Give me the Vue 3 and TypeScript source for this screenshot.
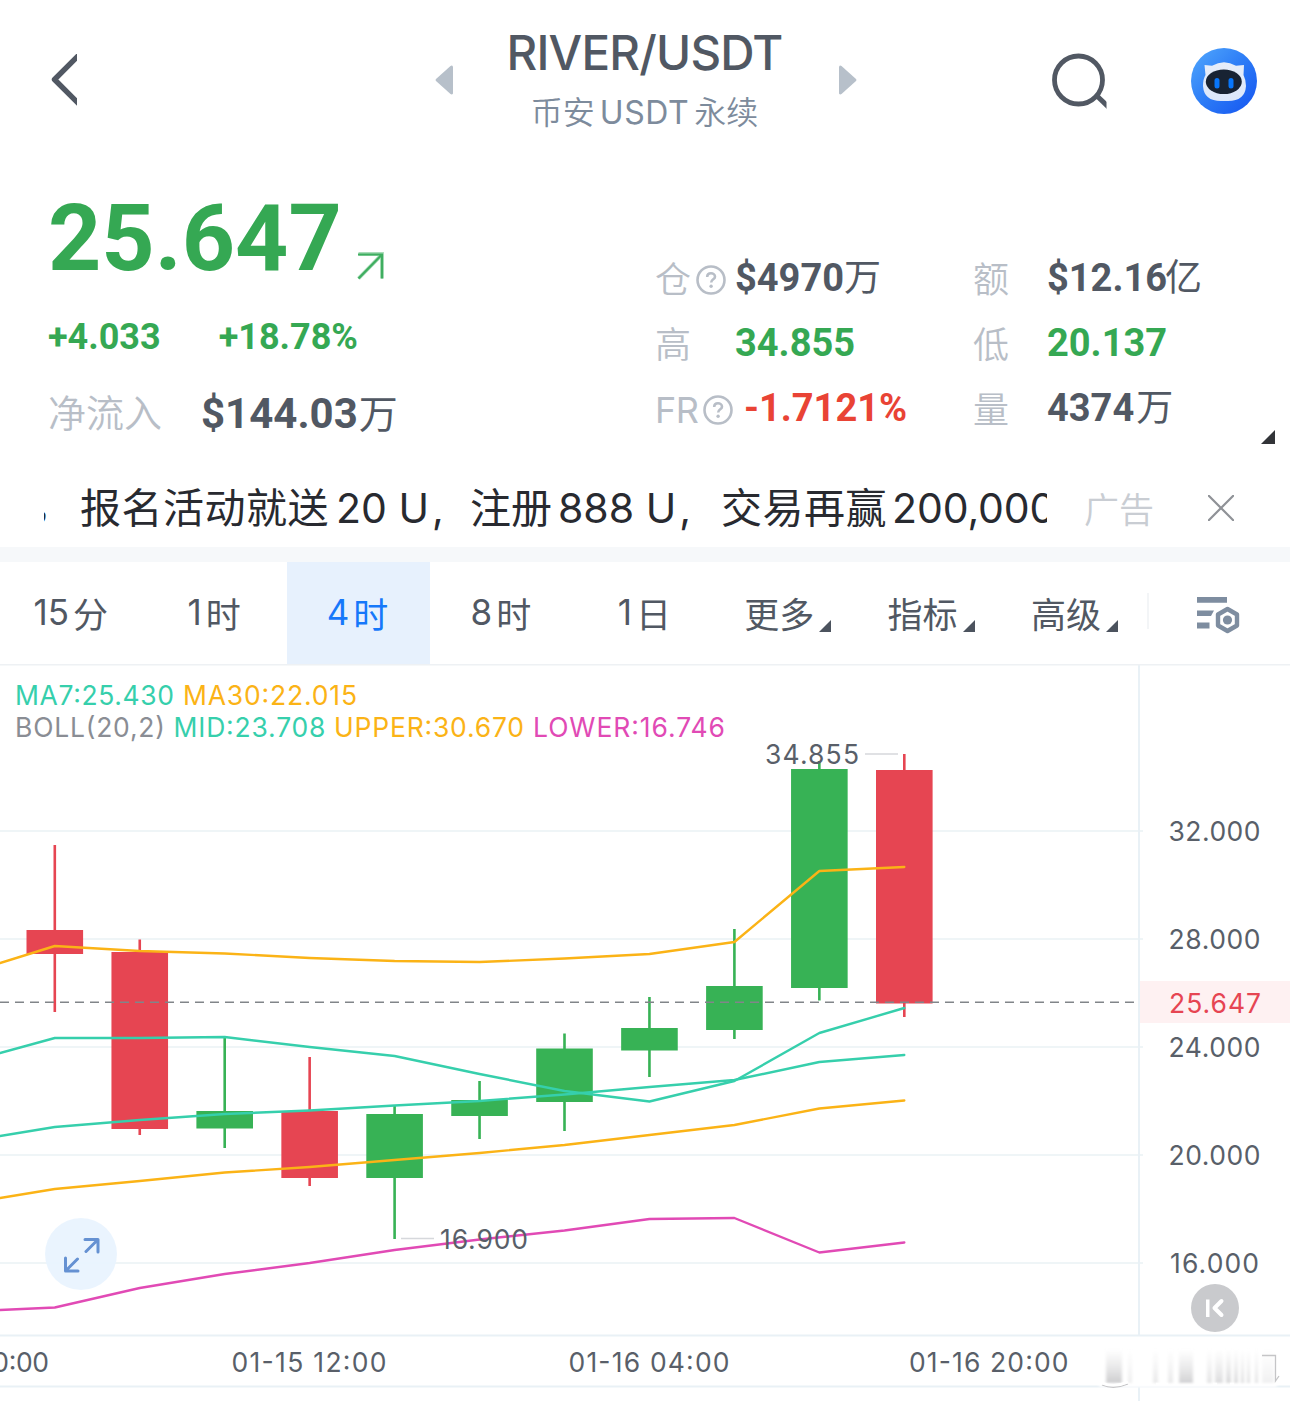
<script setup lang="ts">
interface Tab { num?: string; unit: string; active?: boolean; menu?: boolean }
interface Candle { up: boolean; high: number; low: number; top: number; bottom: number }

const tabs: Tab[] = [
  { num: '15', unit: '分' },
  { num: '1', unit: '时' },
  { num: '4', unit: '时', active: true },
  { num: '8', unit: '时' },
  { num: '1', unit: '日' },
  { unit: '更多', menu: true },
  { unit: '指标', menu: true },
  { unit: '高级', menu: true },
]

const candles: Candle[] = [
  { up: false, high: 845, low: 1012, top: 930, bottom: 954 },
  { up: false, high: 939.5, low: 1135, top: 952, bottom: 1129 },
  { up: true, high: 1037, low: 1148, top: 1111, bottom: 1128.5 },
  { up: false, high: 1057, low: 1186, top: 1111, bottom: 1178 },
  { up: true, high: 1106, low: 1239, top: 1114, bottom: 1178 },
  { up: true, high: 1081, low: 1139, top: 1100, bottom: 1116 },
  { up: true, high: 1033.5, low: 1131, top: 1048.5, bottom: 1102 },
  { up: true, high: 997, low: 1077, top: 1028, bottom: 1050.5 },
  { up: true, high: 929, low: 1039, top: 986, bottom: 1030 },
  { up: true, high: 761, low: 1000.5, top: 769, bottom: 988 },
  { up: false, high: 754, low: 1017, top: 770, bottom: 1003.5 },
]
const cx = (i: number): number => 54.8 + i * 84.95

const series = [
  { color: '#fbb316', ys: [963, 946, 951, 953.5, 958, 961, 962, 958.5, 954, 942, 871, 867] },
  { color: '#36cfac', ys: [1053, 1038, 1038, 1037, 1047, 1056, 1074, 1091, 1101.5, 1081, 1033, 1008] },
  { color: '#36cfac', ys: [1136, 1127, 1120, 1114, 1110.5, 1105.5, 1101, 1094.5, 1087, 1080, 1062, 1055] },
  { color: '#fbb316', ys: [1198, 1189, 1181, 1172.5, 1167, 1160, 1153, 1145, 1135, 1125, 1108.5, 1100.5] },
  { color: '#e14ab5', ys: [1310, 1307.5, 1288, 1274, 1263, 1250, 1239.5, 1230.5, 1219, 1218, 1252.5, 1242.5] },
]
const points = (ys: number[]): string =>
  ys.map((y, i) => `${i === 0 ? 0 : cx(i - 1)},${y}`).join(' ')

const ticks = [
  { y: 831, text: '32.000', x: 1168.5, w: 92 },
  { y: 939, text: '28.000', x: 1168.5, w: 92 },
  { y: 1047, text: '24.000', x: 1168.5, w: 92 },
  { y: 1155, text: '20.000', x: 1168.5, w: 92 },
  { y: 1263, text: '16.000', x: 1170, w: 89 },
]

const legend = [
  { x: 15, y: 705, w: 159, color: '#36cfac', text: 'MA7:25.430' },
  { x: 183, y: 705, w: 174, color: '#fbb316', text: 'MA30:22.015' },
  { x: 15, y: 737, w: 150, color: '#8a8d94', text: 'BOLL(20,2)' },
  { x: 173.5, y: 737, w: 152, color: '#36cfac', text: 'MID:23.708' },
  { x: 334, y: 737, w: 190, color: '#fbb316', text: 'UPPER:30.670' },
  { x: 533, y: 737, w: 192, color: '#e14ab5', text: 'LOWER:16.746' },
]

const smears = [
  { x: 1106, w: 16, o: 1 }, { x: 1128, w: 4, o: 0.35 }, { x: 1153, w: 5, o: 0.45 },
  { x: 1168, w: 5, o: 0.45 }, { x: 1179, w: 14, o: 0.9 }, { x: 1207, w: 5, o: 0.55 },
  { x: 1215, w: 8, o: 0.7 }, { x: 1226, w: 5, o: 0.8 }, { x: 1234, w: 4, o: 0.75 },
  { x: 1241, w: 3, o: 0.7 }, { x: 1247, w: 3, o: 0.65 }, { x: 1255, w: 3, o: 0.6 },
  { x: 1262, w: 12, o: 0.3 },
]
</script>

<template>
  <main class="screen">
    <header class="top">
      <svg class="back" width="28" height="52" viewBox="0 0 28 52"><path d="M31 0 5.500 25.500 31 51" fill="none" stroke="#515863" stroke-width="5.400" stroke-linejoin="round" /></svg>
      <div class="pair">
        <svg width="20" height="32" viewBox="0 0 20 32"><path d="M19 2.500V29.500Q18 31 16.500 30L2 17Q1 16 2 15L16.500 2Q18 .8 19 2.500Z" fill="#b7c0ca" /></svg>
        <div class="names">
          <h1>RIVER/USDT</h1>
          <p><span>币安</span><span class="mid">USDT</span><span>永续</span></p>
        </div>
        <svg width="20" height="32" viewBox="0 0 20 32"><path d="M1 2.500V29.500Q2 31 3.500 30L18 17Q19 16 18 15L3.500 2Q2 .8 1 2.500Z" fill="#b7c0ca" /></svg>
      </div>
      <svg class="search" width="58" height="58" viewBox="0 0 58 58"><g fill="none" stroke="#515863"><circle cx="27.500" cy="28" r="24" stroke-width="4.800" /><path d="M45.500 43.500 60 57.500" stroke-width="5" /></g><path d="M55.500 45V58H58V45Z" fill="#fff" /></svg>
      <svg class="bot" width="66" height="66" viewBox="0 0 66 66">
        <defs>
          <linearGradient id="bg" x1="0" y1="0" x2="1" y2="1"><stop offset="0" stop-color="#52a9fd" /><stop offset=".5" stop-color="#2c7bf6" /><stop offset="1" stop-color="#1453f0" /></linearGradient>
          <linearGradient id="face" x1="0" y1="0" x2="0" y2="1"><stop offset="0" stop-color="#e6edf9" /><stop offset="1" stop-color="#dce7fb" /></linearGradient>
        </defs>
        <circle cx="33" cy="33" r="33" fill="url(#bg)" />
        <path d="M13.500 17 21 17.800Q33 10.500 45 17.800L53 17 52.500 27Q55 32 55 38Q54 53 37 53H30Q13 53 12 38Q12 31 14.500 27Z" fill="url(#face)" />
        <ellipse cx="32.800" cy="33.800" rx="18" ry="12.300" fill="#182333" />
        <rect x="23.500" y="30" width="5" height="10.500" rx="2.500" fill="#0876fa" /><rect x="37.500" y="30" width="5" height="10.500" rx="2.500" fill="#0876fa" />
      </svg>
    </header>

    <section class="quote">
      <div class="left">
        <div class="price"><strong>25.647</strong>
          <svg width="30" height="30" viewBox="0 0 30 30"><path d="M2.500 3H26V27.500M26 3.500 2.500 27.500" fill="none" stroke="#a9dcb8" stroke-width="3.800" /><path d="M2 3.500H26V27.500M26 3.500 2.500 27.500" fill="none" stroke="#3fae60" stroke-width="2.200" /></svg>
        </div>
        <div class="change"><b>+4.033</b><b>+18.78%</b></div>
        <div class="flow"><span>净流入</span><b>$144.03<i>万</i></b></div>
      </div>
      <div class="stats">
        <div class="row">
          <span class="key k1">仓<svg class="help" width="30" height="30" viewBox="0 0 30 30"><circle cx="15" cy="15" r="13.500" /><path d="M11.200 12C11.200 9.500 13 8.200 15 8.200S19 9.600 19 11.700C19 14.400 15.200 14.200 15.200 17.500" /><circle class="dot" cx="15.100" cy="21.300" r="1.700" /></svg></span>
          <b class="v1">$4970<i>万</i></b><span class="key k2">额</span><b class="v2">$12.16<i class="tight">亿</i></b>
        </div>
        <div class="row">
          <span class="key k1">高</span><b class="v1 up">34.855</b><span class="key k2">低</span><b class="v2 up">20.137</b>
        </div>
        <div class="row">
          <span class="key k1 wide"><em>FR</em><svg class="help" width="30" height="30" viewBox="0 0 30 30"><circle cx="15" cy="15" r="13.500" /><path d="M11.200 12C11.200 9.500 13 8.200 15 8.200S19 9.600 19 11.700C19 14.400 15.200 14.200 15.200 17.500" /><circle class="dot" cx="15.100" cy="21.300" r="1.700" /></svg></span>
          <b class="v1 down narrow">-1.7121%</b><span class="key k2">量</span><b class="v2">4374<i class="sp">万</i></b>
        </div>
      </div>
      <svg class="expand" width="14" height="14" viewBox="0 0 14 14"><path d="M14 0V14H0Z" fill="#323438" /></svg>
    </section>

    <section class="ad">
      <div class="marquee"><div class="track"><span class="c0">，</span><span class="a1">报名活动就送</span><span class="a2">20 U<u>,</u></span><span class="a3">注册</span><span class="a4">888 U<u>,</u></span><span class="a5">交易再赢</span><span class="a6">200,000</span></div></div>
      <span class="tag">广告</span>
      <svg width="26" height="26" viewBox="0 0 26 26"><path d="M0 0 26 26M26 0 0 26" stroke="#8f9297" stroke-width="2.200" /></svg>
    </section>

    <nav class="tabs">
      <div v-for="(t, i) in tabs" :key="i" class="tab" :class="{ active: t.active, menu: t.menu }">
        <span v-if="t.num" class="num">{{ t.num }}</span>
        <span>{{ t.unit }}</span>
        <svg v-if="t.menu" width="12" height="12" viewBox="0 0 12 12"><path d="M12 0V12H0Z" fill="#4c535e" /></svg>
      </div>
      <div class="config">
        <svg width="44" height="38" viewBox="0 0 44 38"><path d="M1 1H31V6.800H1ZM1 14.500H18L15 20H1ZM1 26.500H13.500V32.500H1Z" fill="#7e8da0" /><path d="M31.500 13 41 18.500V29.500L31.500 35 22 29.500V18.500Z" fill="none" stroke="#7e8da0" stroke-width="4.400" stroke-linejoin="round" /><circle cx="31.500" cy="24" r="4.600" fill="#7e8da0" /></svg>
      </div>
    </nav>

    <svg class="chart" width="1290" height="737" viewBox="0 664 1290 737">
      <defs>
        <linearGradient id="smear" x1="0" y1="0" x2="0" y2="1"><stop offset="0" stop-color="#dcdcdd" stop-opacity="0" /><stop offset="1" stop-color="#cdcdcf" /></linearGradient>
        <filter id="soft" x="-10%" y="-20%" width="120%" height="140%"><feGaussianBlur stdDeviation="1.800 1" /></filter>
      </defs>
      <g stroke="#eff5f7" stroke-width="2">
        <path v-for="t in ticks" :key="t.y" :d="`M0 ${t.y}H1143`" />
        <path d="M0 1335.500H1290M0 1386.500H1290M1139 664V1335M1139 1387V1401" stroke="#e9f1f6" />
        <path d="M0 664.500H1290" stroke="#eef1f4" />
      </g>
      <rect x="1140" y="981" width="150" height="42" fill="#fef1f2" />
      <g v-for="(c, i) in candles" :key="i" :fill="c.up ? '#37b255' : '#e64552'">
        <rect :x="cx(i) - 1.300" :y="c.high" width="2.600" :height="c.low - c.high" />
        <rect :x="cx(i) - 28.300" :y="c.top" width="56.600" :height="c.bottom - c.top" />
      </g>
      <path d="M0 1002.300H1136" stroke="#818589" stroke-width="1.500" stroke-dasharray="9 6" />
      <polyline v-for="(s, i) in series" :key="`s${i}`" :points="points(s.ys)" fill="none" :stroke="s.color" stroke-width="2.400" stroke-linejoin="round" stroke-linecap="round" />
      <path d="M865 754H898M401 1238.500H434" stroke="#d6d8dc" stroke-width="1.500" />
      <g class="txt">
        <text v-for="l in legend" :key="l.text" :x="l.x" :y="l.y" :textLength="l.w" :style="{ fill: l.color }">{{ l.text }}</text>
        <text x="765" y="764" textLength="94">34.855</text>
        <text x="440" y="1248.500" textLength="88">16.900</text>
        <text v-for="t in ticks" :key="t.text" :x="t.x" :y="t.y + 10" :textLength="t.w">{{ t.text }}</text>
        <text x="1169" y="1012.500" textLength="92" style="fill: #e64552">25.647</text>
        <text x="-24" y="1371.500" textLength="73">00:00</text>
        <text x="231.500" y="1371.500" textLength="155">01-15 12:00</text>
        <text x="568.500" y="1371.500" textLength="161">01-16 04:00</text>
        <text x="909" y="1371.500" textLength="159.500">01-16 20:00</text>
      </g>
      <circle cx="81" cy="1254" r="36" fill="#e9f3fe" fill-opacity=".94" />
      <path d="M85 1239.500H98V1252M97 1240.500 86 1251.500M65.500 1258V1271H78M66.500 1270 77.500 1259" fill="none" stroke="#6591d2" stroke-width="3" stroke-linecap="round" stroke-linejoin="round" />
      <circle cx="1215" cy="1308" r="24" fill="#c9cacd" />
      <path d="M1206 1299.500H1209.500V1317H1206Z" fill="#fff" />
      <path d="M1221.500 1301 1214.500 1308 1221.500 1315" fill="none" stroke="#fff" stroke-width="4" stroke-linecap="round" stroke-linejoin="round" />
      <g filter="url(#soft)">
        <rect x="1099" y="1352" width="178" height="35" fill="#fff" />
        <rect v-for="s in smears" :key="s.x" :x="s.x" y="1349" :width="s.w" height="34" fill="url(#smear)" :opacity="s.o" />
      </g>
      <path d="M1262 1355.500H1275.500V1381L1279 1376M1102 1385Q1114 1390 1128 1384" fill="none" stroke="#c5c5c7" stroke-width="1.300" />
      <path d="M1102 1383Q1114 1388 1128 1382M1156 1384H1168M1196 1384H1206M1213 1384H1217M1230 1384H1234" fill="none" stroke="#fff" stroke-width="2.500" />
    </svg>
  </main>
</template>

<style>
body { margin: 0; background: #fff; overflow: hidden; }
</style>

<style scoped>
.screen { width: 1290px; height: 1401px; overflow: hidden; background: #fff; color: #515863; font-family: Inter, 'Noto Sans CJK SC', sans-serif; display: flex; flex-direction: column; }
svg { display: block; flex: none; }
h1, p { margin: 0; }
i, em { font-style: normal; }
u { text-decoration: none; margin-left: 3px; }
span, b, strong { white-space: nowrap; }
.top { height: 160px; flex: none; display: flex; align-items: center; box-sizing: border-box; padding: 0 33px 0 49px; }
.pair { width: 424px; margin-left: 357px; display: flex; align-items: center; justify-content: space-between; }
.names { display: flex; flex-direction: column; align-items: center; height: 160px; box-sizing: border-box; padding-top: 23px; }
h1 { font-size: 47.5px; line-height: 60px; font-weight: 500; letter-spacing: -.8px; margin-left: -3px; }
.names p { display: flex; align-items: center; color: #7d8b9c; font-size: 32px; line-height: 60px; font-weight: 350; margin: 0 0 0 -3px; }
.mid { font-weight: 400; letter-spacing: .6px; margin: 0 5px 0 5px; }
.search { margin: 2px 0 0 193px; }
.bot { margin-left: auto; margin-top: 2px; }
.quote { height: 300px; flex: none; display: flex; position: relative; }
.left { width: 655px; padding-left: 48px; box-sizing: border-box; font-family: Roboto, 'Noto Sans CJK SC', sans-serif; }
.price { display: flex; color: #35a853; height: 150px; }
.price strong { font-size: 93px; line-height: 158px; font-weight: 700; }
.price svg { margin: 91px 0 0 14px; }
.change { display: flex; gap: 58px; color: #35a853; font-size: 36px; line-height: 54px; height: 54px; }
.flow { display: flex; margin-top: 20px; line-height: 60px; font-size: 38px; color: #b8bec7; font-weight: 350; }
.flow b { font-size: 42px; font-weight: 700; color: #515863; margin-left: 39px; }
.flow i { font-size: 39px; font-weight: 400; margin-left: 1px; }
.stats { padding-top: 86px; }
.row { display: flex; height: 65px; line-height: 65px; font-size: 36px; }
.row b { font-family: Roboto, 'Noto Sans CJK SC', sans-serif; font-size: 38px; font-weight: 700; }
.row i { font-weight: 400; font-size: 37px; }
.row .tight { margin-left: -2px; }
.sp { margin-left: 2px; }
.key { display: flex; align-items: center; color: #b8bec7; font-weight: 350; gap: 5px; padding-top: 3px; box-sizing: border-box; }
.key em { font-size: 36px; font-weight: 400; letter-spacing: -.6px; }
.k1 { width: 80px; }
.k1.wide { width: 89px; gap: 5px; }
.v1 { width: 238px; }
.v1.narrow { width: 229px; }
.k2 { width: 74px; }
.help { fill: none; stroke: #b8bec7; stroke-width: 2.6; }
.help .dot { fill: #b8bec7; stroke: none; }
.up { color: #35a853; }
.down { color: #e94335; }
.expand { position: absolute; right: 15px; bottom: 16px; }
.ad { height: 87px; flex: none; display: flex; align-items: center; padding: 8px 56px 0 44px; box-sizing: border-box; }
.marquee { width: 1003px; overflow: hidden; color: #282a30; font-size: 41px; line-height: 60px; }
.track { display: flex; width: 1200px; margin-left: -10px; }
.c0 { width: 46px; font-size: 36px; font-weight: 350; }
.a1 { width: 256px; letter-spacing: .5px; }
.a2 { width: 134px; }
.a3 { width: 88px; }
.a4 { width: 163px; }
.a5 { width: 171px; letter-spacing: .5px; }
.a6 { letter-spacing: -.1px; }
.tag { width: 72px; font-size: 35px; font-weight: 350; color: #c9cdd3; margin-left: 37px; }
.ad svg { margin-left: auto; }
.tabs { height: 117px; flex: none; display: flex; border-top: 15px solid #f6f8fa; box-sizing: border-box; font-size: 35px; color: #515863; }
.tab { width: 143.4px; display: flex; align-items: center; justify-content: center; padding: 0 2px 2px 0; box-sizing: border-box; }
.num { margin-right: 4px; }
.tab.active { background: #e7f1fd; color: #1678fa; }
.menu svg { margin: 27px 0 0 5px; }
.config { width: 142px; display: flex; align-items: center; justify-content: center; padding-top: 3px; box-sizing: border-box; background: linear-gradient(#f3f5f7, #f3f5f7) 0 31px / 2px 36px no-repeat; }
.chart { flex: none; }
.txt { font-family: Inter, sans-serif; font-size: 26.5px; fill: #595f69; }
</style>
